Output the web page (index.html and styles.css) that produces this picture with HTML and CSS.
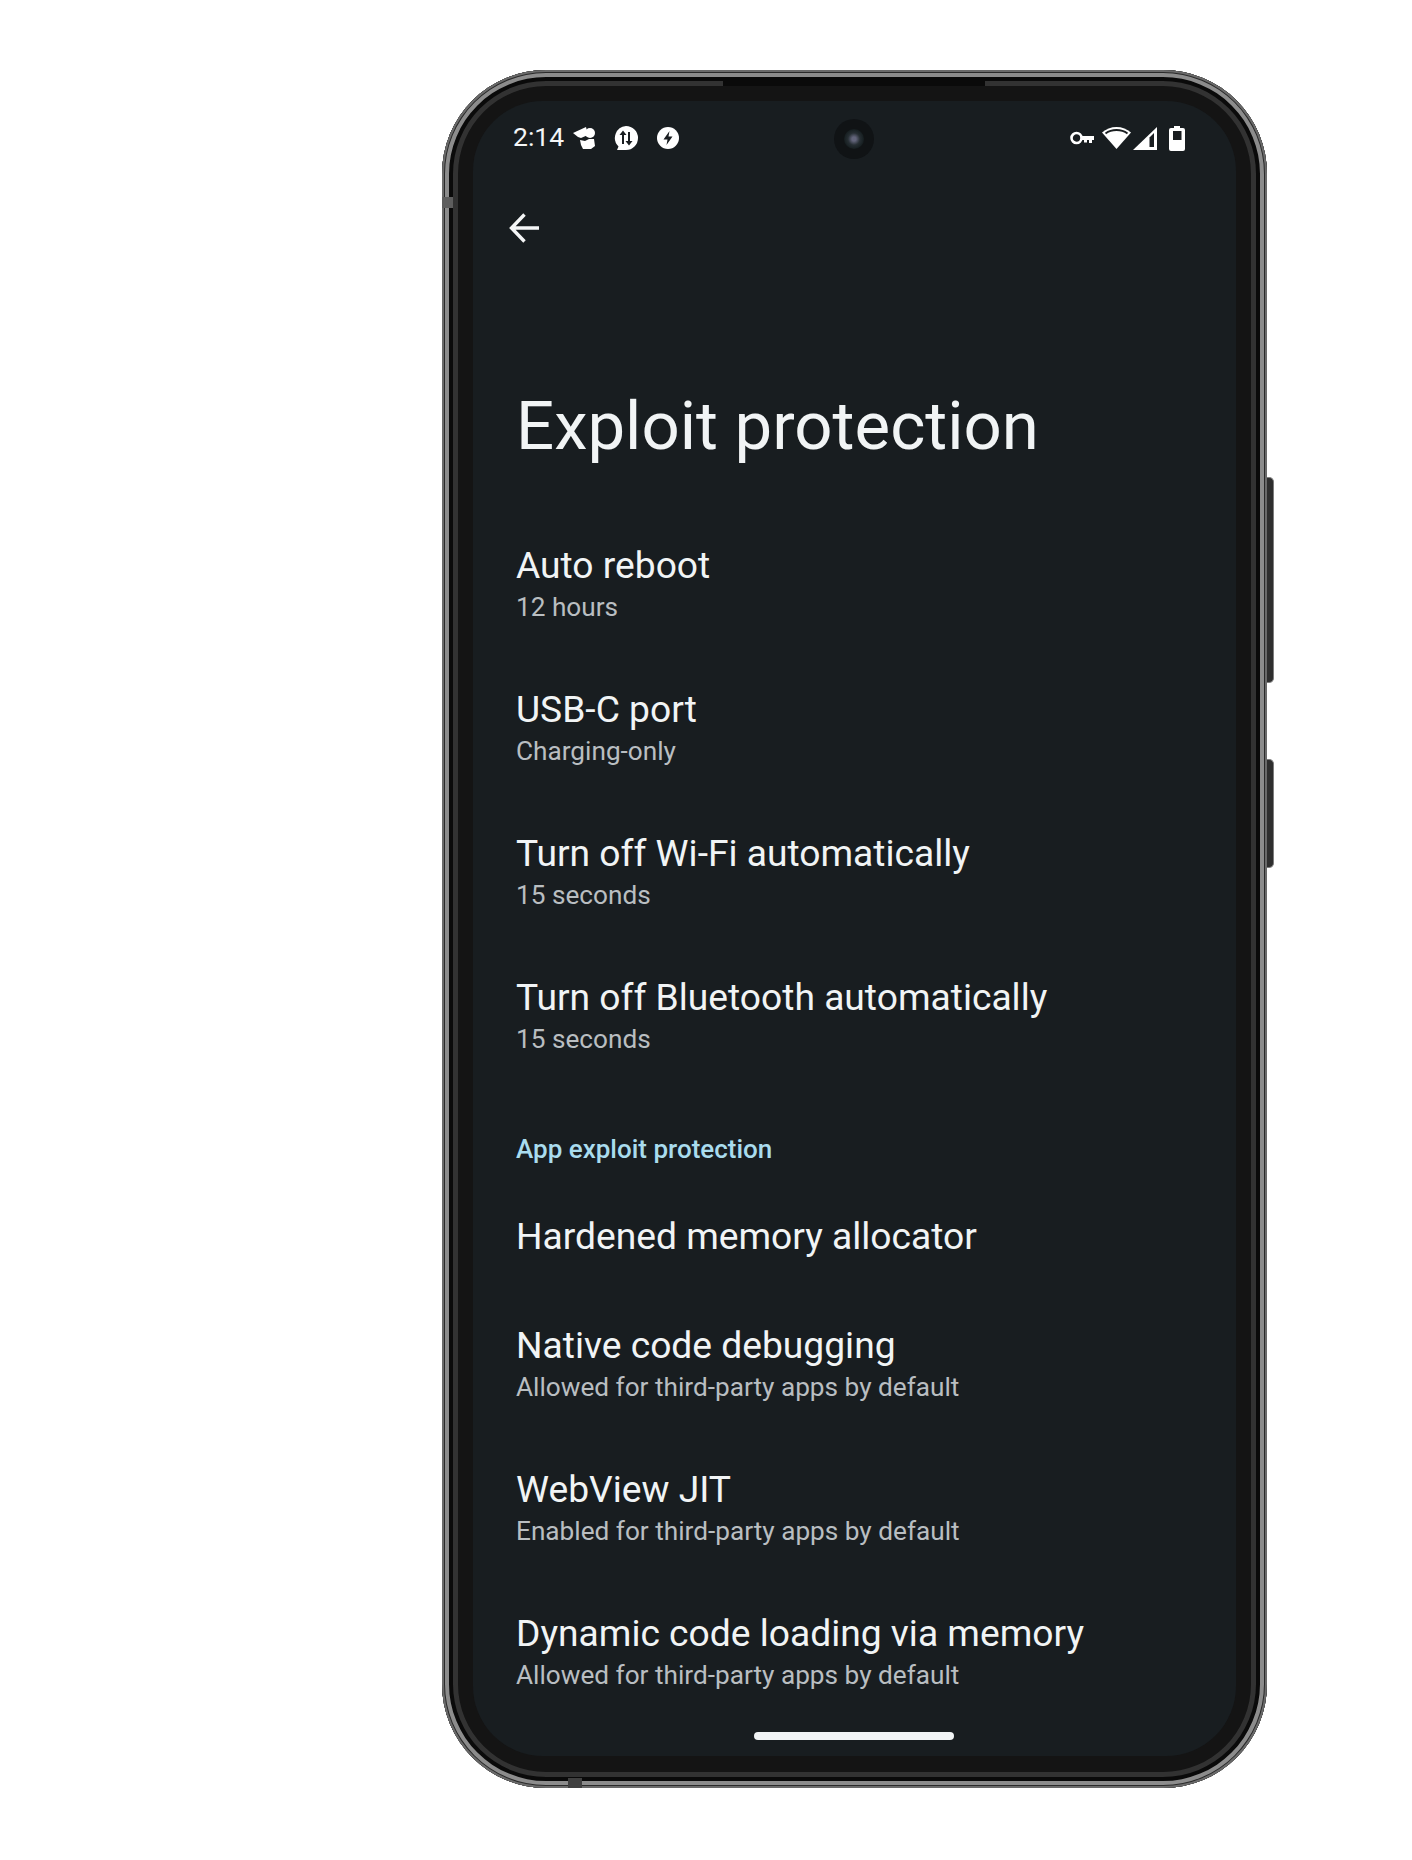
FILE: index.html
```html
<!DOCTYPE html>
<html lang="en">
<head>
  <meta charset="UTF-8" />
  <title>Exploit protection</title>
  <link rel="stylesheet" href="styles.css">
</head>
<body>
  <div class="phone">
    <span class="side-btn power"></span>
    <span class="side-btn volume"></span>
    <span class="band band-left"></span>
    <span class="band band-bottom"></span>
    <span class="earpiece"></span>
    <div class="screen">
      <span class="camera"><span class="lens"></span></span>

      <div class="status-bar">
        <div class="status-left">
          <span class="time">2:14</span>
          <svg class="ic-hat" viewBox="0 0 22 22"><path fill="#fff" d="M0 6 13 0l2 8-7 3-3-1z"/><circle cx="17" cy="6" r="5" fill="#fff"/><path fill="#fff" d="M7 13l5 1 4-2h5l1 7-4 3h-8l-2-4z"/></svg>
          <svg class="ic-data" viewBox="0 0 24 25"><path fill="#fff" d="M12 0a12 12 0 0 1 0 24H3l1.500-3.500A12 12 0 0 1 12 0z"/><path fill="none" stroke="#191d20" stroke-width="2" d="M9 18V7M15 6v11"/><path fill="#191d20" d="M5.500 9 9 4.500 12.500 9zM11.500 15h7L15 19.500z"/></svg>
          <svg class="ic-bolt" viewBox="0 0 22 22"><circle cx="11" cy="11" r="11" fill="#fff"/><path fill="#191d20" d="M12.500 4 6.500 12.500h4L9.500 18l6-8.500h-4z"/></svg>
        </div>
        <div class="status-right">
          <svg class="ic-key" viewBox="0 0 24 14"><circle cx="6.500" cy="7" r="5" fill="none" stroke="#fff" stroke-width="2.600"/><path fill="#fff" d="M11 5h13v4h-2v3h-3V9h-2v2.500h-3V9h-3z"/></svg>
          <svg class="ic-wifi" viewBox="0 0 29 22"><path fill="#fff" d="M14.500 0C20 0 25 2 29 5.500L14.500 22 0 5.500C4 2 9 0 14.500 0z"/><path fill="none" stroke="#191d20" stroke-width="1.800" d="M3.500 6.500C6.500 4.200 10.300 3 14.500 3s8 1.200 11 3.500"/></svg>
          <svg class="ic-signal" viewBox="0 0 24 23"><path fill="#fff" d="M24 0v23H0z"/><path fill="#191d20" d="M21 6v14h-4.500V10.500z"/></svg>
          <svg class="ic-battery" viewBox="0 0 16 25"><path fill="#fff" d="M5 0h6v2h3a2 2 0 0 1 2 2v19a2 2 0 0 1-2 2H2a2 2 0 0 1-2-2V4a2 2 0 0 1 2-2h3z"/><path fill="#191d20" d="M4 5h8.500v9H4z"/></svg>
        </div>
      </div>

      <div class="app-bar">
        <svg class="ic-back" viewBox="0 0 30 30"><path fill="none" stroke="#f4f6f7" stroke-width="3.400" d="M30 15H3M15.500 1.500 2.500 15l13 13.500"/></svg>
      </div>

      <h1 class="page-title">Exploit protection</h1>

      <div class="item">
        <div class="item-title">Auto reboot</div>
        <div class="item-sub">12 hours</div>
      </div>
      <div class="item">
        <div class="item-title">USB-C port</div>
        <div class="item-sub">Charging-only</div>
      </div>
      <div class="item">
        <div class="item-title">Turn off Wi-Fi automatically</div>
        <div class="item-sub">15 seconds</div>
      </div>
      <div class="item">
        <div class="item-title">Turn off Bluetooth automatically</div>
        <div class="item-sub">15 seconds</div>
      </div>

      <div class="section-label">App exploit protection</div>

      <div class="item single">
        <div class="item-title">Hardened memory allocator</div>
      </div>
      <div class="item">
        <div class="item-title">Native code debugging</div>
        <div class="item-sub">Allowed for third-party apps by default</div>
      </div>
      <div class="item">
        <div class="item-title">WebView JIT</div>
        <div class="item-sub">Enabled for third-party apps by default</div>
      </div>
      <div class="item">
        <div class="item-title">Dynamic code loading via memory</div>
        <div class="item-sub">Allowed for third-party apps by default</div>
      </div>

      <span class="home-bar"></span>
    </div>
  </div>
</body>
</html>
```

FILE: styles.css
```css
* { box-sizing: border-box; margin: 0; padding: 0; }
body {
  font-family: Roboto, 'Noto Sans', sans-serif;
  background: #ffffff;
  width: 1412px;
  height: 1860px;
  overflow: hidden;
  padding: 70px 145px 0 442px;
}

/* phone body: the rim lines are stacked inset shadows */
.phone {
  position: relative;
  width: 825px;
  height: 1718px;
  padding: 31px 31px 32px;
  border-radius: 104px;
  background: #141414;
  box-shadow:
    inset 0 0 0 2px #6a6a6a,
    inset 0 0 0 3px #2a2a2a,
    inset 0 0 0 7px #8c8c8c,
    inset 0 0 0 11px #0a0a0a,
    inset 0 0 0 16px #323232;
}
.screen {
  position: relative;
  height: 100%;
  border-radius: 70px;
  background: #181d20;
  padding: 0 43px;
  color: #f1f4f5;
  overflow: hidden;
}

.side-btn {
  position: absolute;
  left: 825px;
  width: 7px;
  background: #2e2e2e;
  border: 1px solid #7d7d7d;
  border-left: none;
  border-radius: 0 5px 5px 0;
}
.power  { top: 407px; height: 206px; }
.volume { top: 689px; height: 109px; }

.band { position: absolute; }
.band-left   { left: 0; top: 127px; width: 11px; height: 11px; background: #5e5e5e; }
.band-bottom { left: 126px; top: 1708px; width: 14px; height: 10px; background: #404040; }
.earpiece {
  position: absolute;
  left: 281px;
  top: 11px;
  width: 262px;
  height: 5px;
  background: #0a0a0a;
}

.camera {
  position: absolute;
  left: 361px;
  top: 18px;
  width: 40px;
  height: 40px;
  border-radius: 50%;
  background: #101315;
  display: flex;
  align-items: center;
  justify-content: center;
}
.lens {
  width: 20px;
  height: 20px;
  border-radius: 50%;
  background: radial-gradient(circle, #62647a 0 2px, #262e33 6px, #151d1f 10px);
}

.status-bar {
  height: 70px;
  padding-top: 25px;
  margin-left: -3px;
  display: flex;
  justify-content: space-between;
  align-items: flex-start;
}
.status-left, .status-right { display: flex; align-items: center; height: 24px; }
.time { font-size: 26.500px; color: #f4f6f7; width: 60px; margin-top: -4px; }
.ic-hat { width: 22px; height: 22px; }
.ic-data { width: 24px; height: 25px; margin-left: 19px; }
.ic-bolt { width: 22px; height: 22px; margin-left: 19px; }
.status-right { padding-right: 8px; }
.ic-key { width: 24px; height: 14px; }
.ic-wifi { width: 29px; height: 22px; margin-left: 8px; }
.ic-signal { width: 24px; height: 23px; margin-left: 2px; }
.ic-battery { width: 16px; height: 25px; margin-left: 12px; }

.app-bar { height: 72px; padding-top: 42px; margin-left: -7px; }
.ic-back { display: block; width: 30px; height: 30px; }

.page-title {
  font-size: 67.100px;
  font-weight: 400;
  line-height: 80px;
  margin-top: 143px;
  margin-bottom: 74px;
  color: #f1f4f5;
}

.item { height: 144px; }
.item.single { height: 109px; }
.item-title { font-size: 37.200px; line-height: 50px; color: #f1f4f5; }
.item-sub { font-size: 26.200px; line-height: 32px; margin-top: 1px; color: #b9bec1; }

.section-label {
  font-size: 26px;
  font-weight: 500;
  line-height: 36px;
  color: #a9dcee;
  margin-top: 15px;
  margin-bottom: 44px;
}

.home-bar {
  position: absolute;
  left: 281px;
  bottom: 16px;
  width: 200px;
  height: 8px;
  border-radius: 4px;
  background: #f1f4f5;
}
```
